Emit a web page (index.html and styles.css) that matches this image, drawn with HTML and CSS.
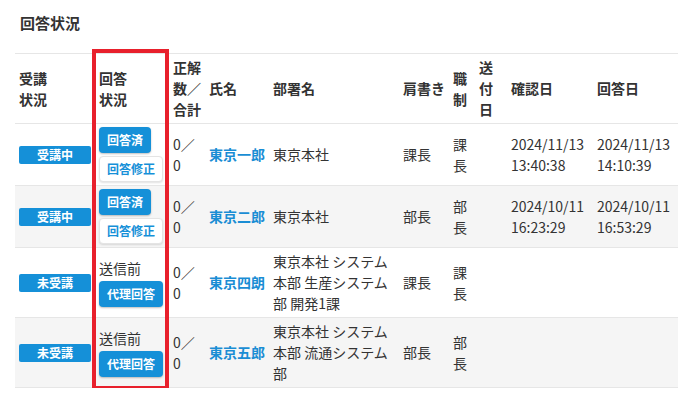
FILE: index.html
```html
<!DOCTYPE html>
<html lang="ja">
<head>
<meta charset="utf-8">
<title>回答状況</title>
<link rel="stylesheet" href="styles.css">
</head>
<body>
<div class="page">
  <h2 class="title">回答状況</h2>
  <div class="table-wrap">
    <table class="answers">
      <colgroup>
        <col class="c-status">
        <col class="c-answer">
        <col class="c-score">
        <col class="c-name">
        <col class="c-dept">
        <col class="c-title">
        <col class="c-rank">
        <col class="c-sent">
        <col class="c-date">
        <col class="c-date2">
      </colgroup>
      <thead>
        <tr>
          <th>受講<br>状況</th>
          <th>回答<br>状況</th>
          <th>正解<br>数／<br>合計</th>
          <th>氏名</th>
          <th>部署名</th>
          <th>肩書き</th>
          <th>職<br>制</th>
          <th>送<br>付<br>日</th>
          <th>確認日</th>
          <th>回答日</th>
        </tr>
      </thead>
      <tbody>
        <tr>
          <td><span class="badge">受講中</span></td>
          <td><div class="actions"><span class="btn">回答済</span><span class="btn btn-outline">回答修正</span></div></td>
          <td>0／<br>0</td>
          <td><span class="name">東京一郎</span></td>
          <td>東京本社</td>
          <td>課長</td>
          <td>課<br>長</td>
          <td></td>
          <td>2024/11/13<br>13:40:38</td>
          <td>2024/11/13<br>14:10:39</td>
        </tr>
        <tr>
          <td><span class="badge">受講中</span></td>
          <td><div class="actions"><span class="btn">回答済</span><span class="btn btn-outline">回答修正</span></div></td>
          <td>0／<br>0</td>
          <td><span class="name">東京二郎</span></td>
          <td>東京本社</td>
          <td>部長</td>
          <td>部<br>長</td>
          <td></td>
          <td>2024/10/11<br>16:23:29</td>
          <td>2024/10/11<br>16:53:29</td>
        </tr>
        <tr>
          <td><span class="badge">未受講</span></td>
          <td><div class="actions actions-tight"><span class="state">送信前</span><span class="btn">代理回答</span></div></td>
          <td>0／<br>0</td>
          <td><span class="name">東京四朗</span></td>
          <td>東京本社 システム本部 生産システム部 開発1課</td>
          <td>課長</td>
          <td>課<br>長</td>
          <td></td>
          <td></td>
          <td></td>
        </tr>
        <tr>
          <td><span class="badge">未受講</span></td>
          <td><div class="actions actions-tight"><span class="state">送信前</span><span class="btn">代理回答</span></div></td>
          <td>0／<br>0</td>
          <td><span class="name">東京五郎</span></td>
          <td>東京本社 システム本部 流通システム部</td>
          <td>部長</td>
          <td>部<br>長</td>
          <td></td>
          <td></td>
          <td></td>
        </tr>
      </tbody>
    </table>
    <div class="highlight"></div>
  </div>
</div>
</body>
</html>
```

FILE: styles.css
```css
html, body {
  margin: 0;
  padding: 0;
  background: #fff;
}

body {
  font-family: "Noto Sans CJK JP", "Noto Sans", sans-serif;
  font-size: 14px;
  color: #333;
}

.page {
  padding: 12px 13px 0 15px;
}

.title {
  margin: 0 0 19px 5px;
  font-size: 15px;
  line-height: 22px;
  font-weight: bold;
  color: #333;
}

.table-wrap {
  position: relative;
  width: 663px;
}

.answers {
  width: 663px;
  border-collapse: collapse;
  table-layout: fixed;
}

.c-status { width: 80px; }
.c-answer { width: 74px; }
.c-score { width: 36px; }
.c-name { width: 64px; }
.c-dept { width: 130px; }
.c-title { width: 50px; }
.c-rank { width: 26px; }
.c-sent { width: 32px; }
.c-date { width: 86px; }
.c-date2 { width: 85px; }

.answers th,
.answers td {
  padding: 3px 4px;
  line-height: 21px;
  text-align: left;
  vertical-align: middle;
  border-top: 1px solid #e6e6e6;
  border-bottom: 1px solid #e6e6e6;
}

.answers th {
  font-weight: bold;
  color: #333;
}

.answers tbody tr:nth-child(even) td {
  background: #f5f5f5;
}

.badge {
  display: block;
  width: 72px;
  height: 18px;
  line-height: 18px;
  font-size: 12px;
  font-weight: bold;
  text-align: center;
  color: #fff;
  background: #1590d8;
  border-radius: 2px;
}

.actions {
  display: flex;
  flex-direction: column;
  align-items: flex-start;
  gap: 3px;
}

.actions-tight {
  gap: 2px;
}

.state {
  line-height: 21px;
}

.btn {
  display: block;
  font-size: 12px;
  font-weight: bold;
  line-height: 16px;
  padding: 5px 8px;
  color: #fff;
  background: #1590d8;
  border-radius: 4px;
  box-shadow: 0 1px 2px rgba(0, 0, 0, 0.25);
  white-space: nowrap;
}

.btn-outline {
  color: #1590d8;
  background: #fff;
  border: 1px solid #e4e4e4;
  padding: 4px 7px;
  box-shadow: 0 1px 2px rgba(0, 0, 0, 0.12);
}

.name {
  color: #1a8dd4;
  font-weight: bold;
  white-space: nowrap;
}

.highlight {
  position: absolute;
  left: 77px;
  top: -4px;
  width: 77px;
  height: 341px;
  border: 4px solid #e8202c;
  box-sizing: border-box;
  pointer-events: none;
}
```
